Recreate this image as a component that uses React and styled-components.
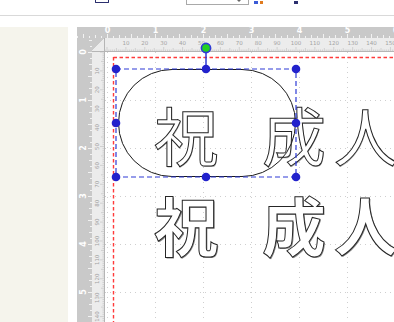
import React from 'react';
import styled, { createGlobalStyle } from 'styled-components';

const GlobalStyle = createGlobalStyle`
  html, body {
    margin: 0;
    padding: 0;
    background: #ffffff;
    overflow: hidden;
  }
  body {
    font-family: "Noto Sans", "Noto Sans CJK JP", sans-serif;
  }
`;

// 48px = 1 inch on the rulers
const INCH = 48;
const MM = INCH / 25.4;

const Screen = styled.div`
  width: 394px;
  height: 322px;
  display: flex;
  flex-direction: column;
  overflow: hidden;
`;

const Toolbar = styled.div`
  height: 15px;
  flex: none;
  border-bottom: 1px solid #d9d9d9;
  display: flex;
  align-items: flex-end;
  overflow: hidden;
`;

const ToolRow = styled.div`
  display: flex;
  align-items: flex-end;
  padding-bottom: 11px;
  padding-left: 95px;
`;

const ToolIcon = styled.div`
  width: 12px;
  height: 16px;
  border: 1px solid #2b2f6e;
  border-top: none;
  border-radius: 0 0 1px 1px;
  margin-bottom: 1px;
`;

const NumberInput = styled.div`
  width: 61px;
  height: 18px;
  margin-left: 77px;
  border: 1px solid #a9a9a9;
  position: relative;
  margin-bottom: -1px;
  &::after {
    content: '';
    position: absolute;
    right: 7px;
    bottom: 2px;
    border-left: 2px solid transparent;
    border-right: 2px solid transparent;
    border-top: 2px solid #666;
  }
`;

const Glyph = styled.div`
  width: ${({ w }) => w}px;
  height: 3px;
  margin-left: ${({ gap }) => gap}px;
  margin-bottom: 0;
  display: flex;
  gap: 2px;
  span {
    flex: 1;
    background: ${({ c }) => c};
  }
  span + span {
    background: ${({ c2 }) => c2 || 'transparent'};
  }
`;

const Spacer = styled.div`
  height: 11px;
  flex: none;
`;

const Main = styled.div`
  flex: 1;
  display: flex;
  min-height: 0;
`;

const SidePanel = styled.div`
  width: 68px;
  flex: none;
  background: #f5f4ec;
`;

const Gutter = styled.div`
  width: 9px;
  flex: none;
  background: #ffffff;
`;

const Workspace = styled.div`
  flex: 1;
  display: grid;
  grid-template-columns: 15px 13px 1fr;
  grid-template-rows: 11px 14px 1fr;
  background: #c9c9c9;
  min-width: 0;
`;

const OuterTop = styled.div`
  grid-column: 1 / 4;
  grid-row: 1;
  overflow: hidden;
  line-height: 0;
`;

const OuterLeft = styled.div`
  grid-column: 1;
  grid-row: 2 / 4;
  overflow: hidden;
  line-height: 0;
`;

const InnerCorner = styled.div`
  grid-column: 2;
  grid-row: 2;
  background: linear-gradient(135deg, #c9c9c9 50%, #ececec 50%);
  border-right: 1px solid #b5b5b5;
  border-bottom: 1px solid #b5b5b5;
  box-sizing: border-box;
`;

const InnerTop = styled.div`
  grid-column: 3;
  grid-row: 2;
  background: #ececec;
  border-bottom: 1px solid #b5b5b5;
  box-sizing: border-box;
  overflow: hidden;
  line-height: 0;
`;

const InnerLeft = styled.div`
  grid-column: 2;
  grid-row: 3;
  background: #ececec;
  border-right: 1px solid #b5b5b5;
  box-sizing: border-box;
  overflow: hidden;
  line-height: 0;
`;

const Canvas = styled.div`
  grid-column: 3;
  grid-row: 3;
  position: relative;
  background: #ffffff;
`;

const Layer = styled.svg`
  position: absolute;
  left: 0;
  top: 0;
  overflow: visible;
  pointer-events: none;
  z-index: ${({ z }) => z || 0};
`;

const Pill = styled.div`
  position: absolute;
  left: ${({ x }) => x}px;
  top: ${({ y }) => y}px;
  width: ${({ w }) => w}px;
  height: ${({ h }) => h}px;
  border: 1px solid #1a1a1a;
  border-radius: ${({ h }) => h / 2}px;
  box-sizing: border-box;
  z-index: 2;
`;

const TextLine = styled.div`
  position: absolute;
  left: ${({ x }) => x}px;
  top: ${({ y }) => y}px;
  display: flex;
  gap: 8px;
  white-space: nowrap;
  font-family: "Noto Sans CJK JP", "Noto Sans CJK SC", sans-serif;
  font-size: 64px;
  line-height: 64px;
  font-weight: ${({ bold }) => (bold ? 700 : 400)};
  color: #ffffff;
  -webkit-text-stroke: 1px #262626;
  text-shadow: ${({ bold }) => (bold ? '1px 1px 0 #8a8a8a' : '0.6px 0.6px 0 #b0b0b0')};
  z-index: 1;
`;

const Char = styled.span`
  margin-left: ${({ pre }) => pre || 0}px;
`;

function OuterRuler({ vertical, length }) {
  const origin = vertical ? 14 : 30;
  const depth = vertical ? 15 : 11;
  const step = INCH / 8;
  const ticks = [];
  const labels = [];
  const first = -Math.floor(origin / step);
  const last = Math.ceil((length - origin) / step);
  for (let i = first; i <= last; i++) {
    const p = origin + i * step;
    const m = ((i % 8) + 8) % 8;
    const len = m === 0 ? 4 : m === 4 ? 4 : m % 2 === 0 ? 3 : 2;
    if (vertical) {
      ticks.push(<line key={i} x1={depth - len} x2={depth} y1={p + 0.5} y2={p + 0.5} />);
    } else {
      ticks.push(<line key={i} x1={p + 0.5} x2={p + 0.5} y1={depth - len} y2={depth} />);
    }
    if (m === 0 && i >= 0) {
      labels.push(
        vertical ? (
          <text key={'l' + i} x={6} y={p} transform={`rotate(-90 6 ${p})`} dy="3" textAnchor="middle">{i / 8}</text>
        ) : (
          <text key={'l' + i} x={p + 0.5} y={6} textAnchor="middle">{i / 8}</text>
        )
      );
    }
  }
  return (
    <svg width={vertical ? depth : length} height={vertical ? length : depth}>
      <g stroke="#f2f2f2" strokeWidth="1">{ticks}</g>
      <g fill="#ffffff" fontSize="8" fontWeight="bold" fontFamily="DejaVu Sans, sans-serif">{labels}</g>
    </svg>
  );
}

function InnerRuler({ vertical, length }) {
  const origin = vertical ? 0 : 2;
  const depth = vertical ? 13 : 14;
  const ticks = [];
  const labels = [];
  const first = -Math.floor(origin / MM);
  const last = Math.ceil((length - origin) / MM);
  for (let i = first; i <= last; i++) {
    const p = origin + i * MM;
    const m = ((i % 10) + 10) % 10;
    const len = m === 0 ? 4 : m === 5 ? 3 : 1.5;
    if (vertical) {
      ticks.push(<line key={i} x1={depth - 1 - len} x2={depth - 1} y1={p} y2={p} />);
    } else {
      ticks.push(<line key={i} x1={p} x2={p} y1={depth - 1 - len} y2={depth - 1} />);
    }
    if (m === 0 && i > 0) {
      labels.push(
        vertical ? (
          <text key={'l' + i} x={5} y={p} transform={`rotate(-90 5 ${p})`} dy="2" textAnchor="middle">{i}</text>
        ) : (
          <text key={'l' + i} x={p} y={7} textAnchor="middle">{i}</text>
        )
      );
    }
  }
  return (
    <svg width={vertical ? depth : length} height={vertical ? length : depth}>
      <g stroke="#bdbdbd" strokeWidth="0.6">{ticks}</g>
      <g fill="#a3a3a3" fontSize="5.5" fontFamily="DejaVu Sans, sans-serif">{labels}</g>
    </svg>
  );
}

// dotted guide grid, one line per inch, and the red page margin
function GuideGrid({ width, height }) {
  const lines = [];
  for (let x = 2; x < width; x += INCH) {
    lines.push(<line key={'v' + x} x1={x + 0.5} x2={x + 0.5} y1={0} y2={height} />);
  }
  for (let y = INCH; y < height; y += INCH) {
    lines.push(<line key={'h' + y} x1={0} x2={width} y1={y + 0.5} y2={y + 0.5} />);
  }
  return (
    <Layer width={width} height={height}>
      <g stroke="#cfcfcf" strokeWidth="1" strokeDasharray="1 4">{lines}</g>
      <g stroke="#ff3b3b" strokeWidth="1.4" strokeDasharray="3.5 2.5">
        <line x1={8.5} x2={8.5} y1={5} y2={height} />
        <line x1={8.5} x2={width} y1={5.5} y2={5.5} />
      </g>
    </Layer>
  );
}

const box = { x: 11, y: 17, w: 180, h: 108 };

function Selection() {
  const { x, y, w, h } = box;
  const handles = [
    [x, y], [x + w / 2, y], [x + w, y],
    [x, y + h / 2], [x + w, y + h / 2],
    [x, y + h], [x + w / 2, y + h], [x + w, y + h],
  ];
  return (
    <Layer width={300} height={280} z={3}>
      <rect x={x} y={y} width={w} height={h} fill="none" stroke="#2e3bd6" strokeWidth="1.2" strokeDasharray="5 3" />
      <line x1={x + w / 2} x2={x + w / 2} y1={y - 21} y2={y} stroke="#2e3bd6" strokeWidth="1.5" />
      {handles.map(([cx, cy], i) => (
        <circle key={i} cx={cx} cy={cy} r="4.3" fill="#2222cc" />
      ))}
      <circle cx={x + w / 2} cy={y - 21} r="4.6" fill="#22d122" stroke="#2e3bd6" strokeWidth="1.6" />
    </Layer>
  );
}

function Phrase({ y, bold }) {
  return (
    <TextLine x={49} y={y} bold={bold}>
      <Char>祝</Char>
      <Char pre={36}>成</Char>
      <Char>人</Char>
    </TextLine>
  );
}

export default function App() {
  return (
    <Screen>
      <GlobalStyle />
      <Toolbar>
        <ToolRow>
          <ToolIcon />
          <NumberInput />
          <Glyph w={9} gap={5} c="#3b5bd6" c2="#e07b1f"><span /><span /></Glyph>
          <Glyph w={4} gap={31} c="#2b2f6e"><span /></Glyph>
        </ToolRow>
      </Toolbar>
      <Spacer />
      <Main>
        <SidePanel />
        <Gutter />
        <Workspace>
          <OuterTop>
            <OuterRuler length={317} />
          </OuterTop>
          <OuterLeft>
            <OuterRuler vertical length={284} />
          </OuterLeft>
          <InnerCorner />
          <InnerTop>
            <InnerRuler length={289} />
          </InnerTop>
          <InnerLeft>
            <InnerRuler vertical length={270} />
          </InnerLeft>
          <Canvas>
            <GuideGrid width={289} height={270} />
            <Phrase y={49} />
            <Phrase y={139} bold />
            <Pill x={box.x + 2} y={box.y} w={box.w - 2} h={box.h} />
            <Selection />
          </Canvas>
        </Workspace>
      </Main>
    </Screen>
  );
}
